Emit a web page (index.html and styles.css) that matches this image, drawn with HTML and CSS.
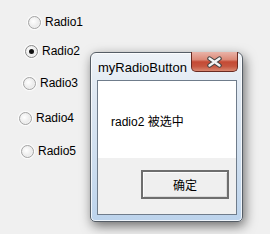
FILE: index.html
```html
<!DOCTYPE html>
<html lang="zh">
<head>
    <meta charset="UTF-8">
    <title>myRadioButton</title>
    <link rel="stylesheet" href="styles.css">
</head>
<body>
    <div class="form">
        <label class="radio radio-1"><span class="circle"></span>Radio1</label>
        <label class="radio radio-2"><span class="circle checked"></span>Radio2</label>
        <label class="radio radio-3"><span class="circle"></span>Radio3</label>
        <label class="radio radio-4"><span class="circle"></span>Radio4</label>
        <label class="radio radio-5"><span class="circle"></span>Radio5</label>
    </div>

    <div class="msgbox">
        <div class="titlebar">
            <span class="title">myRadioButton</span>
            <span class="close">
                <svg width="19" height="12" viewBox="0 0 19 12">
                    <path d="M4.5 2.5 L14.5 9.5 M14.5 2.5 L4.5 9.5" stroke="#404040" stroke-width="4.4" stroke-linecap="round"/>
                    <path d="M4.5 2.5 L14.5 9.5 M14.5 2.5 L4.5 9.5" stroke="#f4f4f4" stroke-width="2.4" stroke-linecap="round"/>
                </svg>
            </span>
        </div>
        <div class="client">
            <div class="msg">radio2 被选中</div>
            <div class="btnbar">
                <button class="ok">确定</button>
            </div>
        </div>
    </div>
</body>
</html>
```

FILE: styles.css
```css
* {
    margin: 0;
    padding: 0;
    box-sizing: border-box;
}

body {
    width: 270px;
    height: 234px;
    background: #f0f0f0;
    font-family: 'Liberation Sans', 'Noto Sans CJK SC', sans-serif;
    font-size: 12px;
    color: #000;
    position: relative;
    overflow: hidden;
}

/* radio list */
.form {
    display: flex;
    flex-direction: column;
    padding-top: 15px;
}

.radio {
    display: flex;
    align-items: center;
    height: 14px;
    gap: 4px;
}

.radio-1 { margin-left: 28px; }
.radio-2 { margin-left: 25px; margin-top: 15px; }
.radio-3 { margin-left: 23px; margin-top: 18px; }
.radio-4 { margin-left: 19px; margin-top: 21px; }
.radio-5 { margin-left: 21px; margin-top: 19px; }

.circle {
    width: 13px;
    height: 13px;
    border-radius: 50%;
    border: 1px solid #a4a4a4;
    background: radial-gradient(circle at 40% 40%, #ffffff 0%, #ececec 55%, #f8f8f8 100%);
    box-shadow: 0 0 1px 1px rgba(255, 255, 255, 0.9);
    display: flex;
    align-items: center;
    justify-content: center;
}

.circle.checked {
    border-color: #8a8a8a;
}

.circle.checked::after {
    content: '';
    width: 5px;
    height: 5px;
    border-radius: 50%;
    background: #111;
}

/* message box */
.msgbox {
    position: absolute;
    left: 90px;
    top: 52px;
    width: 153px;
    height: 170px;
    border: 1px solid #555d66;
    border-radius: 6px 6px 5px 5px;
    background: linear-gradient(to bottom, #eef2f7 0%, #dfe8f2 25%, #cbdcee 70%, #bcd3ec 100%);
    box-shadow: 2px 4px 12px rgba(0, 0, 0, 0.55), inset 0 0 0 1px rgba(255, 255, 255, 0.75);
    display: flex;
    flex-direction: column;
}

.titlebar {
    height: 27px;
    display: flex;
    align-items: center;
    padding-left: 7px;
    position: relative;
}

.title {
    font-size: 13px;
    padding-top: 2px;
}

.close {
    position: absolute;
    top: -1px;
    right: 4px;
    width: 47px;
    height: 20px;
    border: 1px solid #6a2b22;
    border-top: none;
    border-radius: 0 0 5px 5px;
    background: linear-gradient(to bottom, #e9b3a8 0%, #dc8a78 40%, #c44a35 52%, #c65640 75%, #d98770 100%);
    display: flex;
    align-items: center;
    justify-content: center;
}

.client {
    flex: 1;
    margin: 0 5px 6px 6px;
    border: 1px solid #6f7c8b;
    display: flex;
    flex-direction: column;
    background: #f0f0f0;
}

.msg {
    height: 77px;
    background: #fff;
    display: flex;
    align-items: center;
    padding-left: 13px;
    padding-top: 1px;
}

.btnbar {
    flex: 1;
    display: flex;
    justify-content: flex-end;
    align-items: flex-start;
    padding: 12px 7px 0 0;
}

.ok {
    width: 88px;
    height: 29px;
    border: 2px solid #6e6e6e;
    background: #efefef;
    box-shadow: inset 1px 1px 0 #fcfcfc, inset -1px -1px 0 #dadada;
    font-family: 'Liberation Sans', 'Noto Sans CJK SC', sans-serif;
    font-size: 12px;
    color: #000;
}
```
